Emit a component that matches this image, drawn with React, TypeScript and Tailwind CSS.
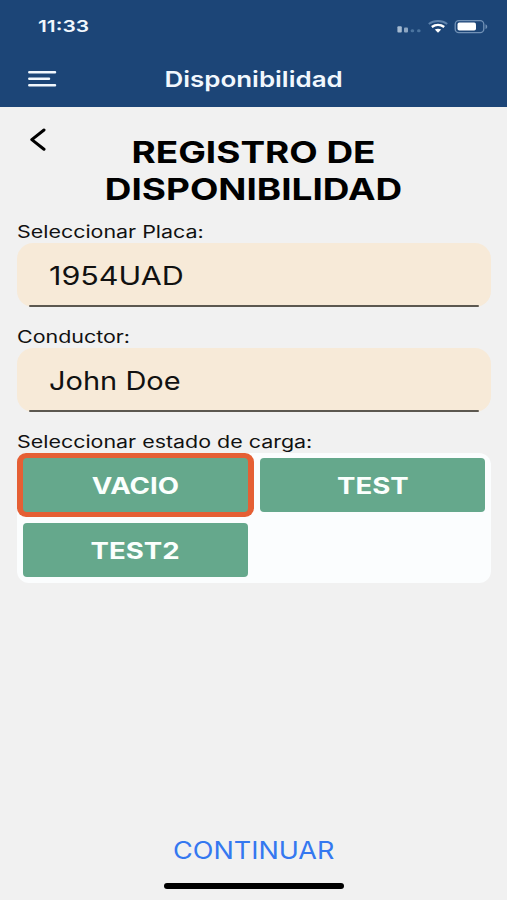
import React, { useState } from "react";

type FieldProps = {
  label: string;
  value: string;
  valueClass: string;
};

const Label = ({ text }: { text: string }) => {
  return (
    <p className="h-[23px] pt-px text-[17px] leading-[23px] whitespace-nowrap">
      <span className="inline-block origin-left scale-x-[1.26]">{text}</span>
    </p>
  );
};

const Field = ({ label, value, valueClass }: FieldProps) => {
  return (
    <div className="h-[105px]">
      <Label text={label} />
      <div className="h-16 w-[474px] rounded-[16px] bg-[#f7ead8] pl-8">
        <p className="h-[62px] text-[25px] leading-[66px]">
          <span className={`inline-block origin-left ${valueClass}`}>
            {value}
          </span>
        </p>
        {/* Underline */}
        <div className="-ml-[20px] h-[2px] w-[450px] rounded-full bg-[#5c5850]" />
      </div>
    </div>
  );
};

const StatusBar = () => {
  return (
    <div className="flex h-[53px] items-center justify-between pl-[38px] pr-[19px]">
      <span className="inline-block origin-left scale-x-[1.27] text-[16.5px] font-semibold">
        11:33
      </span>
      <svg width="92" height="16" viewBox="0 0 92 16" fill="none">
        {/* Signal */}
        <rect x="1.4" y="7.2" width="4.4" height="6.4" rx="1" fill="#a5bad0" />
        <rect x="8" y="8.6" width="4" height="5" rx="1" fill="#8da6c2" />
        <rect x="14.6" y="10.2" width="3.6" height="3" rx="1.5" fill="#4b749f" />
        <rect x="21" y="10.2" width="3.6" height="3" rx="1.5" fill="#4b749f" />
        {/* Wifi */}
        <path d="M32.8 5C38 1 46 1 51.2 5" stroke="#5d82ac" strokeWidth="2" />
        <path d="M35.8 8C39.5 5.2 44.5 5.2 48.2 8" stroke="#fff" strokeWidth="2.4" />
        <path d="M38.8 10.6C40.6 9.3 43.4 9.3 45.2 10.6L42 13.8Z" fill="#fff" />
        {/* Battery */}
        <rect x="59.2" y="1.6" width="28.6" height="12" rx="3.6" stroke="#7191b6" strokeWidth="1.3" />
        <rect x="61.5" y="3.6" width="18.5" height="8" rx="1.8" fill="#fff" />
        <path d="M89.5 5.2C91.8 6 91.8 9.2 89.5 10Z" fill="#7191b6" />
      </svg>
    </div>
  );
};

const states = ["VACIO", "TEST", "TEST2"];

const App = () => {
  const [active, setActive] = useState(0);

  return (
    <div className="flex h-[900px] w-[507px] flex-col overflow-hidden bg-[#f1f1f1] font-['Inter',sans-serif] text-[#111]">
      <header className="h-[107px] bg-[#1c4577] text-[#f1f7fd]">
        <StatusBar />
        <div className="grid h-[52px] grid-cols-[1fr_auto_1fr] items-center">
          <svg className="ml-7" width="29" height="18" viewBox="0 0 29 18">
            <path
              d="M1.3 2.3H27M1.3 8.8H21M1.3 15.3H27"
              stroke="currentColor"
              strokeWidth="2.5"
              strokeLinecap="round"
            />
          </svg>
          <h1 className="scale-x-[1.18] text-[22px] font-semibold">
            Disponibilidad
          </h1>
        </div>
      </header>

      <main className="flex flex-1 flex-col pl-[17px]">
        <div className="flex h-[113px]">
          {/* Back Button */}
          <button className="ml-3 mt-5 h-6 w-[18px]">
            <svg width="18" height="24" viewBox="0 0 18 24" fill="none">
              <path
                d="M15 3L2.8 12.6L15 22.2"
                stroke="#000"
                strokeWidth="3"
                strokeLinecap="round"
                strokeLinejoin="round"
              />
            </svg>
          </button>
          <h2 className="ml-[41px] mt-[27px] w-[331px] scale-x-[1.23] text-center text-[30px] leading-[37px] font-bold text-black">
            REGISTRO DE
            <br />
            DISPONIBILIDAD
          </h2>
        </div>

        <Field
          label="Seleccionar Placa:"
          value="1954UAD"
          valueClass="scale-x-[1.22]"
        />
        <Field
          label="Conductor:"
          value="John Doe"
          valueClass="scale-x-[1.16]"
        />

        <Label text="Seleccionar estado de carga:" />
        <div className="grid h-[130px] w-[474px] grid-cols-2 rounded-[12px] bg-[#fbfdfe]">
          {states.map((item, index) => (
            <div
              key={index}
              onClick={() => setActive(index)}
              className={`mb-px flex h-16 w-[237px] cursor-pointer px-[6px] py-[5px] ${
                active === index ? "rounded-[9px] bg-[#e55f34]" : ""
              }`}
            >
              <div className="flex flex-1 items-center justify-center rounded-[4px] bg-[#65a88c] pt-0.5">
                <span className="scale-x-[1.2] text-[23px] font-bold text-[#fbfffd]">
                  {item}
                </span>
              </div>
            </div>
          ))}
        </div>
      </main>

      <footer className="flex h-[70px] flex-col items-center">
        <button className="h-[40px] scale-x-[1.125] text-[24px] leading-[42px] text-[#3478f0]">
          CONTINUAR
        </button>
        <div className="mt-[13px] h-[6px] w-[180px] rounded-full bg-black" />
      </footer>
    </div>
  );
};

export default App;
